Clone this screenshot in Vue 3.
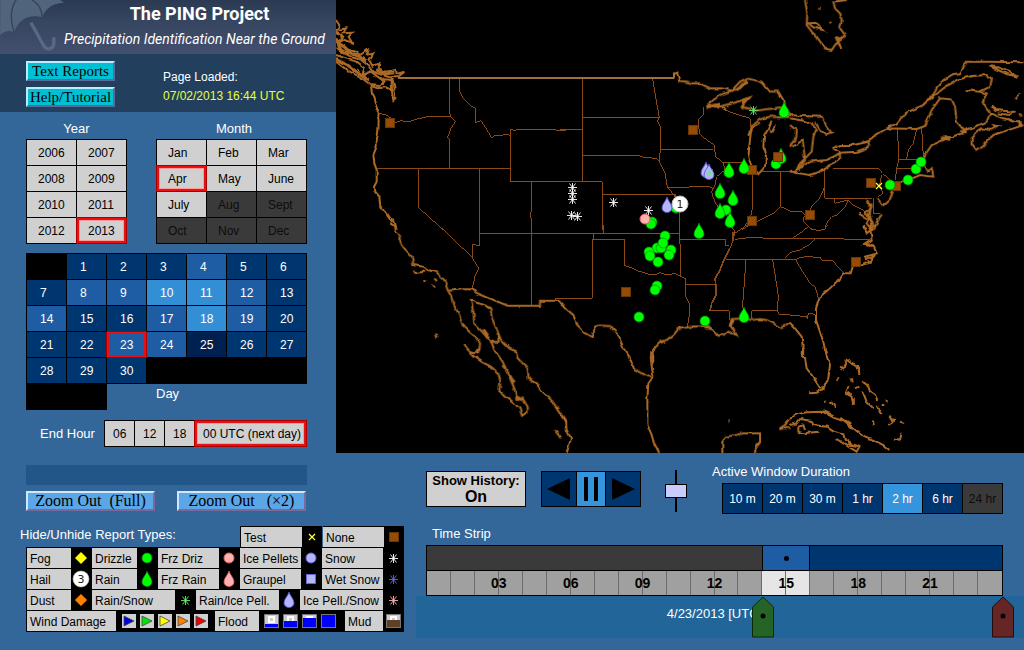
<script setup>
import { ref } from 'vue'

const years = [2006, 2007, 2008, 2009, 2010, 2011, 2012, 2013]
const months = ['Jan', 'Feb', 'Mar', 'Apr', 'May', 'June', 'July', 'Aug', 'Sept', 'Oct', 'Nov', 'Dec']
const year = ref(2013)
const month = ref('Apr')
const day = ref(23)
const speed = ref(50)

// report volume per day: 0 few, 1 normal, 2 busy, 3 very busy
const volumes = { 4: 2, 8: 2, 9: 2, 10: 3, 11: 3, 12: 2, 14: 2, 17: 2, 18: 3, 19: 2, 23: 2, 24: 2, 25: 0 }
const level = (d) => 'v' + (volumes[d] ?? 1)

const endHours = ['06', '12', '18', '00 UTC (next day)']
const endHour = ref('00 UTC (next day)')
const durations = ['10 m', '20 m', '30 m', '1 hr', '2 hr', '6 hr', '24 hr']
const duration = ref('2 hr')
const hourLabels = ['03', '06', '09', '12', '15', '18', '21']

const legend = [
  [['Test', 'cross', 'c5'], ['None', 'box', 'c5']],
  [['Fog', 'fog', 'c1'], ['Drizzle', 'dot-green', 'c2'], ['Frz Driz', 'dot-pink', 'c3'], ['Ice Pellets', 'dot-blue', 'c4'], ['Snow', 'snow', 'c5']],
  [['Hail', 'hail', 'c1'], ['Rain', 'drop-green', 'c2'], ['Frz Rain', 'drop-pink', 'c3'], ['Graupel', 'graupel', 'c4'], ['Wet Snow', 'wetsnow', 'c5']],
  [['Dust', 'dust', 'c1'], ['Rain/Snow', 'rainsnow', 'wide'], ['Rain/Ice Pell.', 'drop-blue', 'wide'], ['Ice Pell./Snow', 'icesnow', 'wide']],
]
const windColors = ['#0000e6', '#00e600', '#ffff00', '#ff8000', '#f00000']
const floodLevels = [4, 7, 10, 13]

const brown = [[390, 123], [693, 130], [752, 170], [752, 221], [626, 292], [871, 183], [896, 186], [810, 215], [856, 262]]
const drops = [[784, 110], [744, 166], [729, 170], [720, 191], [733, 198], [720, 211], [730, 220], [781, 156], [699, 231], [744, 315]]
const dots = [[726, 210], [776, 164], [652, 222], [651, 224], [676, 208], [665, 236], [657, 248], [649, 252], [650, 256], [661, 248], [671, 250], [669, 255], [658, 262], [663, 243], [657, 286], [655, 290], [639, 317], [705, 321], [890, 185], [908, 180], [916, 169], [921, 162]]
const flakes = [[572, 187], [572, 193], [572, 199], [571, 215], [577, 216], [613, 202], [648, 210]]
</script>

<template>
  <div class="page">
    <svg class="defs" width="0" height="0" aria-hidden="true">
      <defs>
        <filter id="rough" x="0" y="0" width="100%" height="100%">
          <feTurbulence type="fractalNoise" baseFrequency="0.16" numOctaves="1" seed="4" />
          <feDisplacementMap in="SourceGraphic" scale="4" xChannelSelector="R" yChannelSelector="G" />
        </filter>
        <symbol id="cross" viewBox="-10 -10 20 20"><path d="M-3-3 3 3M3-3-3 3" stroke="#ffff40" stroke-width="1.3" /></symbol>
        <symbol id="box" viewBox="-10 -10 20 20"><rect x="-4.5" y="-4.5" width="9" height="9" fill="#944c06" stroke="#6a3606" /></symbol>
        <symbol id="fog" viewBox="-10 -10 20 20"><path d="M0-6 6 0 0 6-6 0Z" fill="#ffff00" /></symbol>
        <symbol id="dust" viewBox="-10 -10 20 20"><path d="M0-6 6 0 0 6-6 0Z" fill="#ff8000" stroke="#a04800" stroke-width=".8" /></symbol>
        <symbol id="dot-green" viewBox="-10 -10 20 20"><circle r="5" fill="#00ff00" stroke="#008a00" stroke-width=".7" /></symbol>
        <symbol id="dot-pink" viewBox="-10 -10 20 20"><circle r="5" fill="#ffb0b0" stroke="#e06060" stroke-width="1" /></symbol>
        <symbol id="dot-blue" viewBox="-10 -10 20 20"><circle r="5" fill="#b4b4ff" stroke="#6464dd" stroke-width="1" /></symbol>
        <symbol id="drop-green" viewBox="-10 -10 20 20"><path d="M0-8C1-4 5-1 5 3A5 4.500 0 0 1-5 3C-5-1-1-4 0-8Z" fill="#00ff00" stroke="#008a00" stroke-width=".7" /></symbol>
        <symbol id="drop-pink" viewBox="-10 -10 20 20"><path d="M0-8C1-4 5-1 5 3A5 4.500 0 0 1-5 3C-5-1-1-4 0-8Z" fill="#ffb0b0" stroke="#e06060" stroke-width=".8" /></symbol>
        <symbol id="drop-blue" viewBox="-10 -10 20 20"><path d="M0-8C1-4 5-1 5 3A5 4.500 0 0 1-5 3C-5-1-1-4 0-8Z" fill="#b4b4ff" stroke="#5555cc" stroke-width=".9" /></symbol>
        <symbol id="graupel" viewBox="-10 -10 20 20"><rect x="-4.500" y="-4.500" width="9" height="9" fill="#b4b4ff" stroke="#6464dd" /></symbol>
        <symbol id="snow" viewBox="-10 -10 20 20"><path d="M.5-4V5M-4 .5H5M-2.500-3.500 3.500 4.500M3.500-3.500-2.500 4.500" stroke="#fff" stroke-width=".9" /></symbol>
        <symbol id="wetsnow" viewBox="-10 -10 20 20"><path d="M.5-4V5M-4 .5H5M-2.500-3.500 3.500 4.500M3.500-3.500-2.500 4.500" stroke="#6464ee" stroke-width=".9" /></symbol>
        <symbol id="rainsnow" viewBox="-10 -10 20 20"><path d="M.5-4V5M-4 .5H5M-2.500-3.500 3.500 4.500M3.500-3.500-2.500 4.500" stroke="#64f064" stroke-width=".9" /></symbol>
        <symbol id="icesnow" viewBox="-10 -10 20 20"><path d="M.5-4V5M-4 .5H5M-2.500-3.500 3.500 4.500M3.500-3.500-2.500 4.500" stroke="#ffb0b0" stroke-width=".9" /></symbol>
        <symbol id="hail" viewBox="-10 -10 20 20"><circle r="8" fill="#fff" stroke="#bbb" stroke-width=".6" /><text y="4" text-anchor="middle" font-family="DejaVu Sans, sans-serif" font-size="11" fill="#222">3</text></symbol>
      </defs>
    </svg>

    <aside class="side">
      <header class="banner">
        <svg class="umbrella" viewBox="0 0 200 162" aria-hidden="true">
          <path d="M0 0H180L192 8C165 8 135 22 126 52C90 42 55 55 42 97C30 90 12 92 0 106Z" fill="#50647c" />
          <path d="M48 0C30 25 30 60 42 97M95 0C115 10 125 30 126 52" fill="none" stroke="#34425a" stroke-width="4" />
          <path d="M92 68C105 90 118 115 130 136C140 153 158 148 161 132V112" fill="none" stroke="#566a82" stroke-width="10" />
        </svg>
        <h1>The PING Project</h1>
        <p>Precipitation Identification Near the Ground</p>
      </header>

      <section class="info">
        <div class="links">
          <button class="cyan">Text Reports</button>
          <button class="cyan">Help/Tutorial</button>
        </div>
        <div class="loaded">Page Loaded:<br><span>07/02/2013 16:44 UTC</span></div>
      </section>

      <section class="pickers">
        <div>
          <h2>Year</h2>
          <div class="cells two">
            <button v-for="y in years" :key="y" class="cell" :class="{ picked: y === year }" @click="year = y">{{ y }}</button>
          </div>
        </div>
        <div>
          <h2>Month</h2>
          <div class="cells three">
            <button v-for="(m, i) in months" :key="m" class="cell" :class="{ picked: m === month }" :disabled="i > 6" @click="month = m">{{ m }}</button>
          </div>
        </div>
      </section>

      <section class="calendar">
        <div class="cells seven">
          <span></span>
          <button v-for="d in 30" :key="d" class="cell" :class="[level(d), { picked: d === day }]" @click="day = d">{{ d }}</button>
        </div>
        <div class="dayrow"><span class="void"></span><span class="daytext">Day</span></div>
      </section>

      <section class="endhour">
        <span class="label">End Hour</span>
        <div class="cells hoursel">
          <button v-for="h in endHours" :key="h" class="cell" :class="{ picked: h === endHour }" @click="endHour = h">{{ h }}</button>
        </div>
      </section>

      <div class="status"></div>
      <div class="zooms">
        <button class="sky">Zoom Out &nbsp;(Full)</button>
        <button class="sky">Zoom Out &nbsp; (×2)</button>
      </div>

      <section class="legend">
        <div v-for="(row, r) in legend" :key="r" class="lrow" :class="{ first: r === 0 }">
          <span v-if="r === 0" class="label ltitle">Hide/Unhide Report Types:</span>
          <button v-for="item in row" :key="item[0]" class="type" :class="item[2]">
            <span>{{ item[0] }}</span>
            <svg width="20" height="20"><use :href="'#' + item[1]" width="20" height="20" /></svg>
          </button>
        </div>
        <div class="lrow">
          <button class="type wind">
            <span>Wind Damage</span>
            <svg width="98" height="20">
              <g v-for="(c, i) in windColors" :key="c" :transform="`translate(${6 + i * 18} 3)`">
                <rect width="14" height="14" fill="#d0d0d0" />
                <path d="M2 2 12 7 2 12Z" :fill="c" stroke="#444" stroke-width=".8" />
              </g>
            </svg>
          </button>
          <button class="type flood">
            <span>Flood</span>
            <svg width="85" height="20">
              <g v-for="(f, i) in floodLevels" :key="f" :transform="`translate(${5 + i * 19} 3)`">
                <rect x=".5" y=".5" width="14" height="13" fill="#ccc" stroke="#777" />
                <path d="M5 3H10V8H5Z" fill="none" stroke="#fff" stroke-width="2" />
                <rect x="1" :y="14 - f" width="13" :height="f - 1" fill="#0000ff" />
              </g>
            </svg>
          </button>
          <button class="type mud">
            <span>Mud</span>
            <svg width="20" height="20">
              <rect x="3.500" y="3.500" width="14" height="13" fill="#ccc" stroke="#777" />
              <path d="M8 6H13V10H8Z" fill="none" stroke="#fff" stroke-width="2" />
              <rect x="4" y="9" width="13" height="7" fill="#5e4024" />
            </svg>
          </button>
        </div>
      </section>
    </aside>

    <main class="main">
      <svg class="map" viewBox="336 0 688 453" role="img" aria-label="Report map">
        <rect x="336" width="688" height="453" fill="#000" />
        <g fill="none" stroke="#8a4a18" stroke-width="3" shape-rendering="crispEdges">
          <g transform="translate(336 0) scale(.33333)">
            <path d="M341 237V340L345 350 358 365 345 385 340 400 333 412 342 420 341 505M130 340 150 345 162 352 172 370 195 362 215 366 240 358 280 349H341M371 237V275L380 292 405 318 420 325 418 368 435 362 450 385 467 414 475 408 500 405 515 402 523 408M122 505H523M690 390 662 391 655 388H548L535 391 523 388V545H690M247 505V622L322 690M431 505V690M586 545V630L583 650 586 655V690" />
          </g>
          <g transform="translate(560 0) scale(.33333)">
            <path d="M67 237V545M67 352H298M278 237 285 280 292 320 298 352 292 365 300 375 302 448M67 466H235L250 472 290 475 300 488 315 520 322 560 345 590M302 448 298 470 300 488M302 448H460M432 322 430 345 415 358 418 400 440 420 462 435 467 470 490 488H545M490 488 495 510 470 530 465 555 455 575 458 590 470 615 490 640 510 655 520 690M325 562 450 560 458 567M127 583H345M0 545H127V690M345 583 358 620V690M0 390 10 388H67M578 523V620L573 645 560 670 545 690M661 515V620M600 515H710M490 328 530 343 570 355 572 380M545 690 560 680 600 660 640 640 661 620 690 632" />
          </g>
          <g transform="translate(790 0) scale(.33333)">
            <path d="M322 387 327 478M380 387 370 430 355 450 350 478M395 385 400 470M325 478H395M327 478 320 505H390M320 505 316 540M105 505V595H245M130 505H265L278 520 300 540M275 525 268 560 280 580 265 590M105 555 98 575 85 600 65 620 55 640 42 650 42 665 65 690M0 635H35L45 645M105 685 112 665 125 650 140 645 165 620 175 600M135 595V610L175 600 190 615 220 630 230 650M250 595V640H270" />
          </g>
          <g transform="translate(336 225) scale(.33333)">
            <path d="M307 0 412 100M431 0V62L410 58V100L428 130 418 150 410 185 412 195M586 0V242M431 25H690M690 220H660V227" />
          </g>
          <g transform="translate(560 225) scale(.33333)">
            <path d="M0 220H97V43H193V122L215 128 235 138 265 147 285 150 300 143 320 150 345 145 375 160M0 25H358M130 0V25M100 25V43M358 0V43L498 43 495 62H508M358 43 363 75 362 155M375 158 377 178H467M377 178 378 215 390 240 388 270 382 305M510 0 525 20 518 50 510 70 490 110 478 140 465 160 468 185V210L455 235 450 258H508V285M497 103H690M525 43 565 38 690 41M558 103 548 240 550 258M638 103 650 180 655 215 652 258 660 270H690M575 280V258H652M525 25 540 15 560 0M675 100 690 84" />
            <path d="M510 70 490 110 478 140 465 160 468 185V210L455 235 450 258M520 20 518 50" stroke-width="5" />
          </g>
          <g transform="translate(790 225) scale(.33333)">
            <path d="M0 40 240 43M0 83 30 75 60 58 75 42M0 103H18L28 98 50 95 90 97 97 107 128 108 160 142M18 103 25 120 45 150 60 175 75 185 85 218M0 270 50 275 52 283 55 265 75 268M10 38 30 25 55 5 65 12 85 17 105 12 112 0" />
          </g>
        </g>

        <path d="M398 78H674" stroke="#a0703c" stroke-width="2" shape-rendering="crispEdges" />
        <g fill="none" stroke="#ac6a26" stroke-width="6" filter="url(#rough)">
          <g transform="translate(336 0) scale(.33333)">
            <path d="M105 260 108 278 115 290 120 308 126 325 124 345 128 360 127 390 122 420 122 440 112 465 115 490 122 510 122 545 114 560 115 573 130 590 133 620 150 640 160 655 175 660 182 690M170 655 165 672 180 680M105 258 125 265 150 262 165 270 172 300 178 295 175 260 170 240 145 238 140 255" />
            <path d="M0 60 10 75 2 90 30 85 22 100 50 98 38 110 48 128 20 118 5 125 30 148 60 155 72 165 95 150 90 165 112 160 100 180 110 200 130 190 128 205 150 215 180 210 182 222 205 215 185 232 160 232 140 225 110 215 95 195 75 180 45 170 15 155 0 140M0 165 30 175 60 185 85 205 80 225 105 215 125 230 145 245 130 258 105 255 85 240 60 225 30 208 0 185" />
            <path d="M0 95 20 110 8 130 25 140 45 160 70 170 90 185M0 115 15 150 40 162M0 178 35 195 70 222 100 240M120 210 150 222 175 218M165 240 168 290" stroke-width="9" />
          </g>
          <g transform="translate(560 0) scale(.33333)">
            <path d="M342 234 342 220 352 220 358 243 380 245 400 250 420 250 450 265 485 265 515 272 540 245 560 235 605 245 630 275 655 275 670 300 672 320 690 345M440 320 460 300 480 285 515 272 540 265 560 245M440 322 485 318 520 310 545 300 570 292 545 320 590 332 640 325 665 322M485 318 495 330M600 358 575 380 572 400 568 440 565 470 575 500 595 522 615 500 618 470 610 440 612 410 625 385 635 362M600 358 630 350 660 352 690 350M625 385 638 395 648 375M565 400 585 380 600 370" />
            <path d="M530 270 560 242M565 405 580 380M440 320 480 312M545 310 560 295" stroke-width="8" />
          </g>
          <g transform="translate(790 0) scale(.33333)">
            <path d="M-10 352 0 345 40 348 95 350 105 370 125 400 110 405 90 390 75 365M0 355 40 362 65 370 80 390 70 410 65 455 30 490 15 518 60 525 100 510 150 475V460L110 480 55 485 35 505M0 375 18 390 15 415 0 440M10 440 38 420 45 480 25 510M0 515H15M130 445 150 435 190 435 235 425 238 440 200 455 150 458 130 445M215 430 250 410 290 385 320 370 345 340 400 315 430 285 440 262 460 240 490 222 510 220 530 185H600L700 187M400 312 430 290 460 265 500 240 545 228 590 225 605 240 600 260 570 275 530 270M570 275 590 280 580 300 585 320 600 340 590 365 550 382 525 390M290 385 380 387 405 378 425 330 450 295 485 298 495 320 500 365 525 395 500 405 465 418 425 435 405 465 400 490 415 515 425 505 430 530 390 525 355 540 325 548M605 375 625 378 600 390 575 385 545 415 545 430 560 450 580 435 610 405 640 395 670 385 700 375M600 340 640 355 690 365M605 315 620 330 670 335 660 345 620 340M598 198 640 205 685 230 650 222 598 198M675 300 690 280M690 350V340M310 570 300 600 280 618 262 595M275 640 265 660 250 690M232 600 240 620 225 640 240 650 230 670 245 690M205 640 240 660" />
            <path d="M45 0 52 40 50 75 65 95 80 110 105 145 125 150 135 135 165 105 150 85 155 60 150 40 135 25 130 5 170 0M55 70 80 68 98 90 70 82ZM120 65 122 70M110 98 112 100M138 110 145 130 155 145M140 115 155 120M88 26H92M455 412 480 420M605 320 618 335M290 382 305 375" />
            <path d="M138 110 148 130M455 415 480 412M240 610 238 650 250 680M510 395H530M690 360V380" stroke-width="9" />
          </g>
          <g transform="translate(336 225) scale(.33333)">
            <path d="M175 0 180 18 192 30 190 45 205 70 228 95 232 120 265 125 275 135 300 140 325 165 335 195 345 212 352 238 365 260 380 300 400 320 425 340 432 355 430 375 415 382 400 378 385 360 400 380 415 395 440 412 465 425 487 445 493 470 490 498 510 515 530 530 550 550 558 572 575 560V545L560 520 545 525 535 490 520 455 500 410 475 375 468 355 440 322 415 295 412 260 405 225 430 235 445 240 463 250 468 280 485 320 495 345 520 370 540 380 545 400 575 430 578 462 600 475 620 500 650 530 680 575 690 590V610M335 197 380 193H410L420 203 515 242H612V227H668L690 252M232 138 245 143 268 139M262 168H268M295 160 303 168M290 178 297 185M297 325 302 338M658 615 675 637M485 325 488 350 468 350" />
            <path d="M445 315 458 345M520 450 535 475M500 420 508 430M540 515 560 525M425 375V385" stroke-width="9" />
          </g>
          <g transform="translate(560 225) scale(.33333)">
            <path d="M0 235 40 270 50 298 75 323 98 336 105 305 120 302 150 303 178 335 190 370 208 395 222 432 245 445 275 455M690 293 660 308 640 295 620 285 600 282 575 285 555 280 515 282 510 300 520 315 530 330 505 320 495 328 475 332 460 315 440 305 400 304 380 308 355 312 340 330 320 345 300 352 285 368 272 395 275 425 280 455 265 475 262 520V600L275 630 280 650 298 684M487 684V650L500 635 550 625 600 625 600 650 580 684M0 565 15 590 20 615 33 640 20 684M690 580 675 600 658 612 690 608M505 588H509" />
            <path d="M350 312 362 308M300 352 312 348M275 380V410M520 285 508 305M588 662 600 650M430 308 455 311" stroke-width="9" />
          </g>
          <g transform="translate(790 225) scale(.33333)">
            <path d="M222 0 230 25 248 10 240 0M240 0 242 20 245 45 222 60 250 62 260 85 225 95 228 105 255 90 240 110 215 118 190 120 182 145 160 145 140 170 120 190 90 215 78 250V285L100 350 105 375 120 420 115 460 100 492 80 503 60 505M0 293 15 310 35 335 38 360 35 385 45 400 50 430 65 450 78 470 90 488 105 485M150 425 160 430 170 405 185 415 205 425 208 450M142 460V468M183 460 185 472M175 482 168 505 185 515 192 540M195 490 205 485M215 470 235 485 240 500 255 510 262 525M218 500 230 530 250 550M260 545 275 570M290 525V530M298 575 310 590 295 600M300 582 318 585M330 590 343 594M335 625 330 645 315 640M248 590 252 600M103 530H110M122 528 135 548M275 540H280" />
            <path d="M0 578 20 568 50 562 100 560 130 578 165 590 190 610 215 630 250 645 280 660 298 675M0 600 20 595 30 582 65 588 70 600 110 605 130 620 160 628 165 645 190 658 208 665 200 680 175 665 140 642M25 605 25 620 40 625 85 620M25 605 40 600 45 615" />
            <path d="M190 518V535M200 425 208 440M165 590 190 612M38 370V390M150 580 180 600M230 60H250M175 500 180 512M100 560 130 572M175 655 200 665" stroke-width="9" />
          </g>
        </g>

        <use v-for="(p, i) in brown" :key="'b' + i" href="#box" :x="p[0] - 10" :y="p[1] - 10" width="20" height="20" />
        <use v-for="(p, i) in dots" :key="'g' + i" href="#dot-green" :x="p[0] - 10" :y="p[1] - 10" width="20" height="20" />
        <use v-for="(p, i) in drops" :key="'d' + i" href="#drop-green" :x="p[0] - 10" :y="p[1] - 10" width="20" height="20" />
        <use v-for="(p, i) in flakes" :key="'s' + i" href="#snow" :x="p[0] - 10" :y="p[1] - 10" width="20" height="20" />
        <use href="#box" x="768" y="147" width="20" height="20" />
        <use href="#rainsnow" x="743" y="100" width="20" height="20" />
        <use href="#drop-blue" x="696" y="160" width="20" height="20" />
        <use href="#drop-blue" x="699" y="162" width="20" height="20" />
        <use href="#rainsnow" x="699" y="163" width="20" height="20" />
        <use href="#drop-blue" x="657" y="195" width="20" height="20" />
        <use href="#dot-pink" x="635" y="209" width="20" height="20" />
        <use href="#cross" x="869" y="176" width="20" height="20" />
        <circle cx="680" cy="204" r="8" fill="#fff" stroke="#bbb" />
        <text x="680" y="208" text-anchor="middle" class="hailcount">1</text>
      </svg>

      <section class="controls">
        <button class="history"><span>Show History:</span><b>On</b></button>
        <div class="player">
          <button aria-label="Back"><svg width="24" height="24"><path d="M0 12 23 1V23Z" /></svg></button>
          <button class="on" aria-label="Pause"><svg width="14" height="24"><path d="M0 0H4V24H0ZM10 0H14V24H10Z" /></svg></button>
          <button aria-label="Forward"><svg width="24" height="24"><path d="M24 12 1 1V23Z" /></svg></button>
        </div>
        <input v-model="speed" class="speed" type="range" min="0" max="100" aria-label="Speed">
        <div class="duration">
          <h2>Active Window Duration</h2>
          <div class="cells durs">
            <button v-for="d in durations" :key="d" class="cell" :class="{ on: d === duration }" :disabled="d === '24 hr'" @click="duration = d">{{ d }}</button>
          </div>
        </div>
      </section>

      <section class="timeline">
        <h2>Time Strip</h2>
        <div class="strip">
          <div class="spans"><span class="off"></span><span class="window"><i></i></span><span class="live"></span></div>
          <div class="hours">
            <span v-for="n in 24" :key="n" class="tick" :class="{ lit: n === 15 || n === 16 }" :style="{ gridColumn: n }"></span>
            <b v-for="(h, i) in hourLabels" :key="h" :style="{ gridColumn: `${3 * i + 3} / span 2` }">{{ h }}</b>
          </div>
        </div>
      </section>
      <div class="track">
        <div class="rail">
          <span>4/23/2013 [UTC]</span>
          <svg class="marker start" width="24" height="42"><path d="M1.500 41V11L12 1 22.500 11V41Z" fill="#266426" stroke="#0a280a" /><circle cx="12" cy="20" r="2.500" /></svg>
          <svg class="marker end" width="24" height="42"><path d="M1.500 41V11L12 1 22.500 11V41Z" fill="#662626" stroke="#280a0a" /><circle cx="12" cy="20" r="2.500" /></svg>
        </div>
      </div>
    </main>
  </div>
</template>

<style>
body { background: #336699; }
</style>

<style scoped>
.page {
  display: grid;
  grid-template-columns: 336px minmax(0, 1fr);
  min-height: 100vh;
  background: #336699;
  color: #fff;
  font: 13px/14px "Liberation Sans", Arial, sans-serif;
}
.page *, .page *::before { box-sizing: border-box; }
.defs { position: absolute; }
button { margin: 0; padding: 0; border: 0; border-radius: 0; font: inherit; color: inherit; cursor: pointer; }
button:disabled { cursor: default; }
h1, h2, p { margin: 0; font-weight: normal; }
h2 { font-size: 13px; line-height: 14px; text-align: center; }

.banner {
  position: relative;
  height: 54px;
  padding-top: 2px;
  background: linear-gradient(#2b3a52, #364560 40%, #434f6e);
  font-family: Roboto, "Liberation Sans", sans-serif;
}
.umbrella { position: absolute; left: 0; top: 0; width: 67px; height: 54px; }
.banner h1 { position: relative; padding-left: 63px; font-size: 18px; line-height: 24px; font-weight: bold; text-align: center; }
.banner p { position: relative; padding-right: 11px; font-size: 14px; line-height: 26px; font-style: italic; text-align: right; white-space: nowrap; }

.info { display: flex; gap: 48px; height: 58px; padding: 7px 0 0 26px; background: #223f5e; }
.links { display: flex; flex-direction: column; gap: 6px; }
.cyan, .sky {
  height: 20px;
  border: 2px solid;
  font: 16px/16px "Liberation Serif", "Times New Roman", serif;
  color: #000;
  white-space: pre;
}
.cyan { width: 89px; font-size: 15px; background: #00c0d4; border-color: #b8ecff #5a6a9a #5a6a9a #b8ecff; }
.sky { width: 129px; background: #5aa6e6; border-color: #cfe8ff #7a6a9a #7a6a9a #cfe8ff; }
.loaded { padding-top: 7px; font-size: 12px; line-height: 19px; }
.loaded span { color: #e6ff3c; }

.cells { display: grid; gap: 1px; padding: 1px; background: #000; font-size: 12px; }
.cell { height: 25px; padding-left: 11px; background: #d0d0d0; color: #000; text-align: left; white-space: nowrap; }
.cell:disabled { background: #3a3a3a; color: #0c0c0c; }
.picked { box-shadow: inset 0 0 0 2px #e81010, inset 0 0 0 3px #ff9a9a, 0 0 0 1px #a80000; }
.pickers { display: flex; gap: 29px; padding: 10px 0 0 26px; }
.pickers h2 { margin-bottom: 3px; }
.pickers > div:last-child h2 { padding-left: 5px; }
.two { grid-template-columns: repeat(2, 49px); }
.three { grid-template-columns: repeat(3, 49px); }
.calendar { width: 281px; margin: 9px 0 0 26px; }
.seven { grid-template-columns: repeat(7, 1fr); }
.seven .cell { padding-left: 13px; color: #fff; }
.v0 { background: #002050; }
.v1 { background: #003670; }
.v2 { background: #1e5ca4; }
.v3 { background: #328fd6; }
.seven .picked { box-shadow: inset 0 0 0 2px #e81010, 0 0 0 1px #a80000; }
.dayrow { display: flex; height: 26px; }
.void { width: 81px; background: #000; }
.daytext { padding: 3px 0 0 49px; }
.endhour { display: flex; align-items: center; justify-content: space-between; width: 267px; margin: 10px 0 0 40px; }
.hoursel { grid-template-columns: repeat(3, 29px) 111px; }
.hoursel .cell { padding-left: 8px; }
.status { width: 281px; height: 20px; margin: 18px 0 6px 26px; background: #225588; }
.zooms { display: flex; justify-content: space-between; width: 280px; margin-left: 26px; }

.legend { width: 378px; margin: 15px 0 0 26px; position: relative; }
.lrow { display: flex; gap: 1px; height: 22px; margin-bottom: -1px; padding: 1px; background: #000; }
.lrow.first { background: none; padding: 0 0 1px; }
.ltitle { flex: 1; margin-left: -6px; line-height: 17px; white-space: nowrap; }
.type { display: flex; flex: none; height: 20px; background: #d0d0d0; color: #000; font-size: 12px; line-height: 22px; text-align: left; }
.first .type { height: 21px; border-top: 1px solid #000; background: #000; }
.first .type:nth-child(2) { box-shadow: -1px 0 #000; }
.type span { flex: 1; height: 20px; padding-left: 3px; background: #d0d0d0; white-space: nowrap; }
.type svg { flex: none; background: #000; }
.c1 { width: 64px; }
.c2 { width: 65px; }
.c3, .c4, .c5 { width: 81px; }
.wide { width: 103px; }
.wind { width: 187px; }
.flood { width: 129px; }
.mud { width: 58px; }

.main { min-width: 0; }
.map { display: block; width: 100%; }
.hailcount { font: 11px "DejaVu Sans", sans-serif; fill: #222; }
.controls { display: flex; align-items: flex-start; padding: 12px 21px 0 90px; }
.history, .player, .speed { margin-top: 6px; }
.history { display: flex; flex-direction: column; align-items: center; width: 100px; height: 36px; padding-top: 1px; border: 1px solid #000; background: #d0d0d0; color: #000; font-weight: bold; }
.history span { line-height: 16px; }
.history b { font-size: 16px; line-height: 16px; }
.player { display: grid; grid-template-columns: 34px 28px 34px; gap: 1px; padding: 1px; height: 36px; margin-left: 15px; background: #000; }
.player button { display: flex; align-items: center; justify-content: center; background: #003670; }
.player .on { background: #3494dc; }
.speed {
  appearance: none;
  writing-mode: vertical-lr;
  width: 22px;
  height: 42px;
  margin: 5px 0 0 24px;
  background: linear-gradient(#000, #000) center / 2px 100% no-repeat;
}
.speed::-webkit-slider-thumb { appearance: none; width: 22px; height: 14px; border: 1px solid #000; border-radius: 0; background: #ccccff; }
.duration { margin-left: auto; }
.duration h2 { text-align: left; margin-bottom: 4px; }
.durs { grid-template-columns: repeat(7, 39px); margin-left: 10px; }
.durs .cell { height: 29px; padding: 0; text-align: center; background: #003670; color: #fff; }
.durs .on { background: #3494dc; }
.durs .cell:disabled { background: #3a3a3a; color: #0c0c0c; }

.timeline { padding: 13px 21px 0 90px; }
.timeline h2 { margin-bottom: 4px; padding-left: 6px; text-align: left; }
.strip { border: 1px solid #000; }
.spans { display: grid; grid-template-columns: 14fr 2fr 8fr; height: 25px; border-bottom: 1px solid #000; }
.off { background: #3a3a3a; }
.window { display: flex; align-items: center; justify-content: center; background: #1e5ca4; border: solid #000; border-width: 0 1px; }
.window i { width: 5px; height: 5px; border-radius: 50%; background: #000; }
.live { background: #003670; }
.hours { display: grid; grid-template-columns: repeat(24, minmax(0, 1fr)); grid-template-rows: 24px; background: #a0a0a0; color: #000; }
.hours > * { grid-row: 1; }
.tick { border-right: 1px solid #6c6c6c; }
.tick:nth-child(24) { border-right: 0; }
.lit { background: #e6e6e6; }
.hours b { font-size: 14px; line-height: 24px; text-align: center; }
.track { margin-left: 80px; padding: 0 21px 0 10px; background: #226699; }
.rail { position: relative; height: 42px; text-align: center; line-height: 36px; }
.marker { position: absolute; top: 0; transform: translateX(-50%); }
.start { left: 58.3333%; }
.end { left: 100%; }
</style>
